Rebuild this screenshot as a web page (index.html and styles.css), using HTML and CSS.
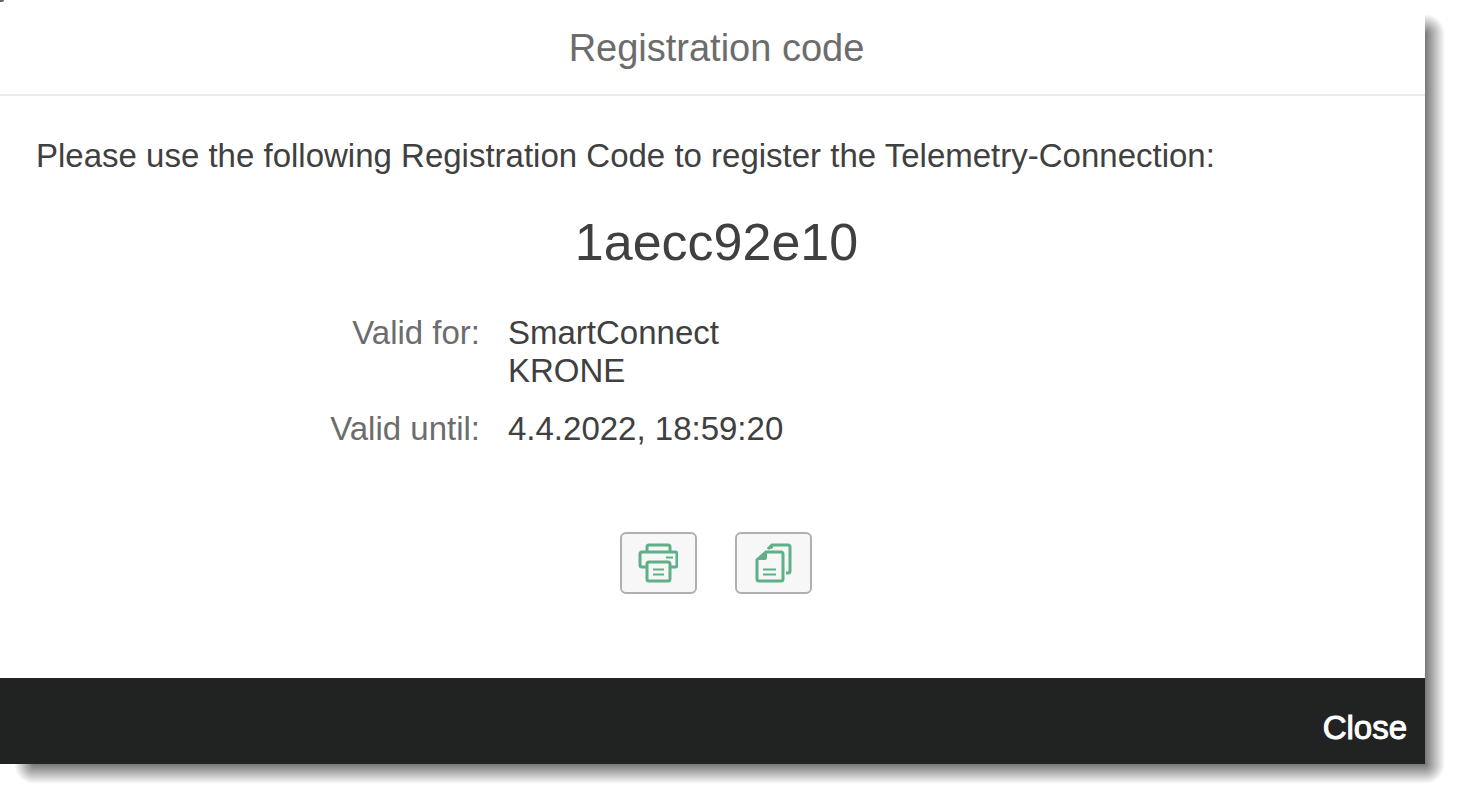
FILE: index.html
```
<!DOCTYPE html>
<html lang="en">
<head>
<meta charset="utf-8">
<title>Registration code</title>
<link rel="stylesheet" href="styles.css">
</head>
<body>
<main class="dialog" role="dialog" aria-labelledby="title">
  <header class="header"><h1 class="title" id="title">Registration code</h1></header>
  <section class="content">
    <p class="intro">Please use the following Registration Code to register the Telemetry-Connection:</p>
    <p class="code">1aecc92e10</p>
    <dl class="details">
      <dt>Valid for:</dt><dd>SmartConnect<br>KRONE</dd>
      <dt>Valid until:</dt><dd>4.4.2022, 18:59:20</dd>
    </dl>
    <div class="actions">
      <button class="icon-button" type="button" aria-label="Print">
        <svg class="icon" viewBox="0 0 40 40"><path d="M9 9V4Q9 2 11 2H30Q32 2 32 4V9M9 24H4Q2 24 2 22V11Q2 9 4 9H37Q39 9 39 11V22Q39 24 37 24H32M9 21Q9 19 11 19H30Q32 19 32 21V36Q32 38 30 38H11Q9 38 9 36Z"/><path class="thin" d="M15 26.500h11M15 31.500h11M28 14.500h7"/></svg>
      </button>
      <button class="icon-button" type="button" aria-label="Copy">
        <svg class="icon" viewBox="0 0 40 40"><path d="M13 9H28Q30 9 30 11V36Q30 38 28 38H6Q4 38 4 36V17ZM15 6L19 2H35Q37 2 37 4V28Q37 30 35 30H33"/><path class="thin" d="M10 26.500h13M10 31.500h13"/><path class="fold" d="M4 17L12 9H14V15Q14 17 12 17ZM14 6L19 1H20V5L18 6Z"/></svg>
      </button>
    </div>
  </section>
  <footer class="footer"><button class="close" type="button">Close</button></footer>
  <span class="cursor" aria-hidden="true"></span>
</main>
</body>
</html>
```
FILE: styles.css
```
* { box-sizing: border-box; }
html { background: #fff; }
body { margin: 0; min-height: 100vh; color: #404040; font-family: "Liberation Sans", Arial, sans-serif; }
.dialog { position: relative; isolation: isolate; margin-right: 36px; }
.dialog::before {
  content: "";
  position: absolute;
  z-index: -1;
  top: 14px;
  left: 14px;
  right: -20px;
  bottom: -20px;
  background:
    radial-gradient(circle at 0 100%, #777, #fff 20px) right top / 20px 20px no-repeat,
    radial-gradient(circle at 100% 0, #777, #fff 20px) left bottom / 20px 20px no-repeat,
    radial-gradient(circle at 0 0, #777, #fff 20px) right bottom / 20px 20px no-repeat,
    linear-gradient(to right, #777, #fff) right 20px / 20px calc(100% - 40px) no-repeat,
    linear-gradient(to bottom, #777, #fff) 20px bottom / calc(100% - 40px) 20px no-repeat;
}
.header { height: 96px; padding-top: 3px; background: #fff; border-bottom: 2px solid #ebebeb; display: flex; align-items: center; justify-content: center; }
.title { margin: 0; padding-left: 8px; font-size: 38px; font-weight: 400; color: #6c6c6c; }
.content { padding: 40px 36px 84px; background: #fff; }
.intro { margin: 0; font-size: 33px; line-height: 40px; }
.code { margin: 36px 0 0; padding-left: 8px; text-align: center; font-size: 52px; line-height: 60px; }
.details { display: grid; grid-template-columns: 444px 1fr; gap: 20px 28px; margin: 42px 0 0; font-size: 33px; line-height: 38px; }
.details dt { text-align: right; color: #6c6c6c; }
.details dd { margin: 0; }
.actions { display: flex; justify-content: center; gap: 38px; margin-top: 84px; padding-left: 6px; }
.icon-button { width: 77px; height: 62px; padding: 0; display: flex; align-items: center; justify-content: center; background: #f7f7f7; border: 2px solid #b0b0b0; border-radius: 6px; }
.icon { width: 40px; height: 40px; fill: none; stroke: #5fb087; stroke-width: 3; }
.icon .thin { stroke-width: 2; }
.icon .fold { fill: #5fb087; stroke: none; }
.footer { height: 86px; padding: 14px 18px 0 0; background: #212322; display: flex; justify-content: flex-end; align-items: center; }
.close { background: none; border: 0; padding: 0; color: #fff; font: 33px "Liberation Sans", Arial, sans-serif; -webkit-text-stroke: 1px #fff; }
.cursor { position: absolute; top: 0; left: 0; width: 4px; height: 2px; background: #666; border-bottom-right-radius: 2px; }
```
